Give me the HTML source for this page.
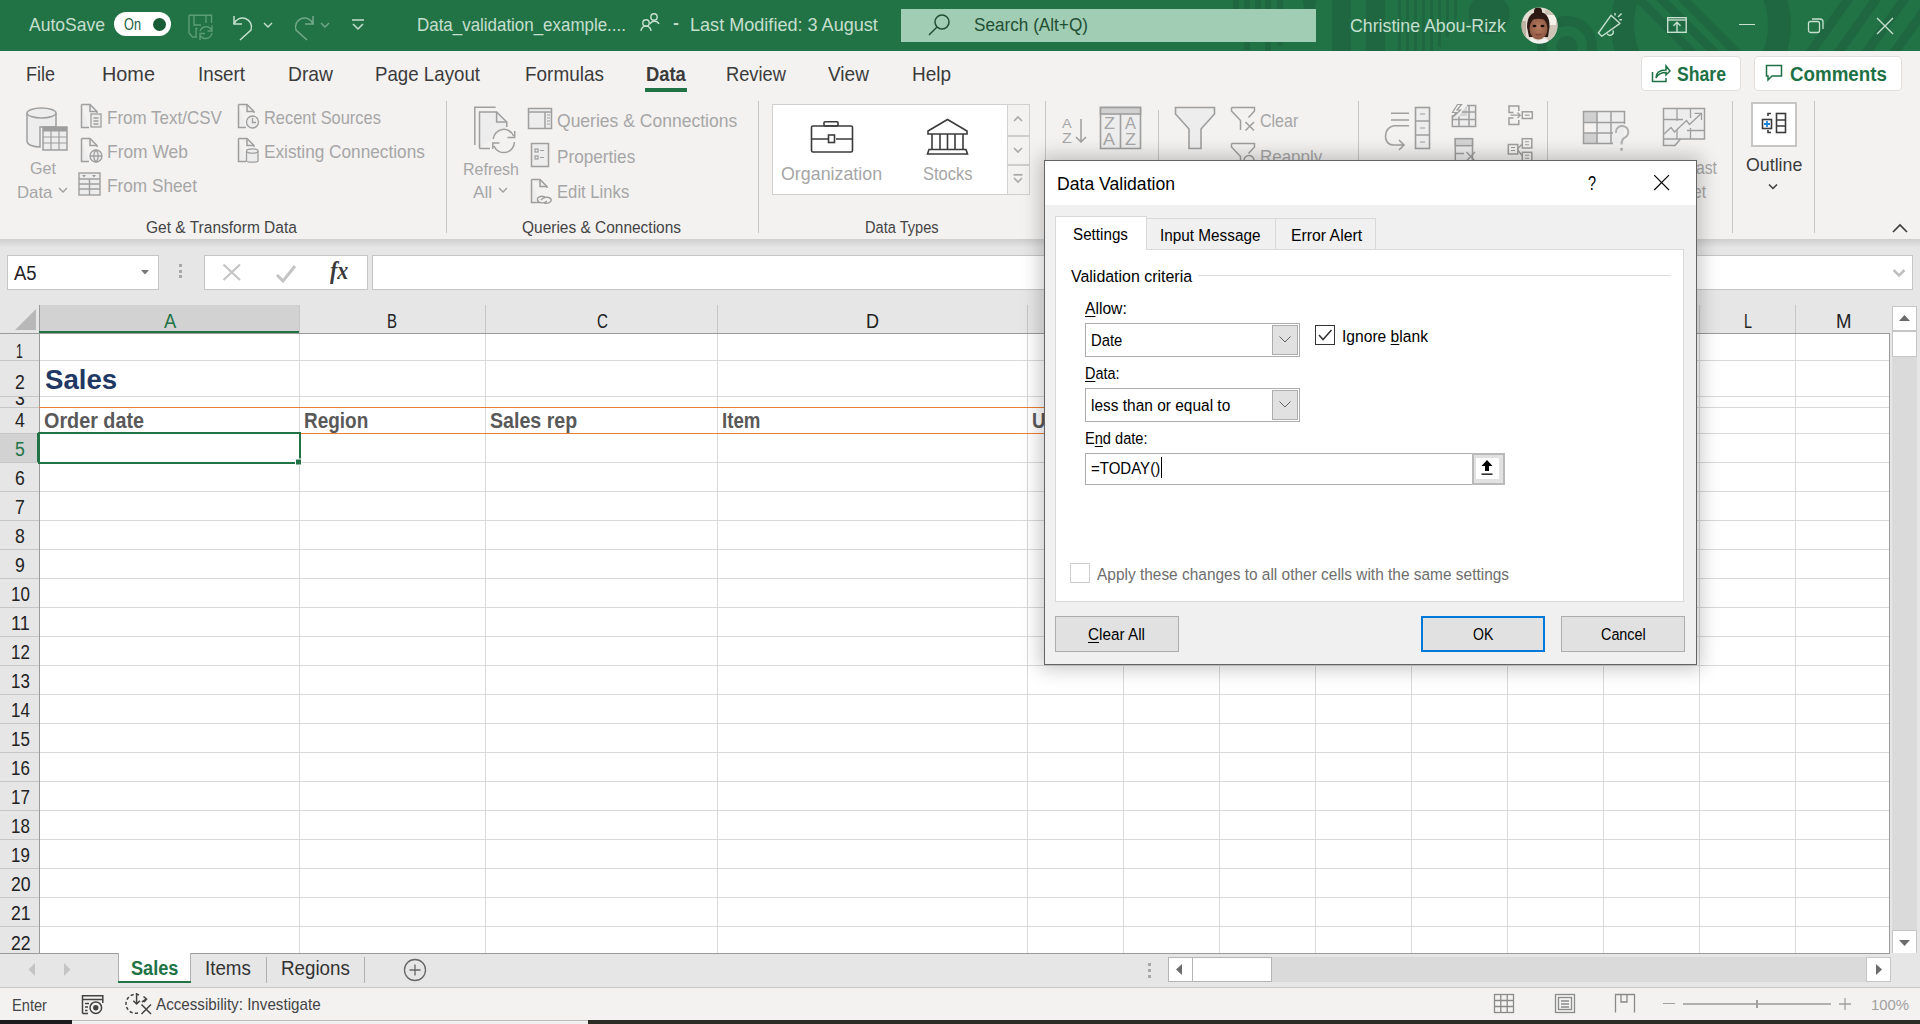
<!DOCTYPE html>
<html><head><meta charset="utf-8"><style>
html,body{margin:0;padding:0;width:1920px;height:1024px;overflow:hidden;background:#fff;position:relative;}
.t{position:absolute;white-space:nowrap;}
.r{position:absolute;}
svg.r{overflow:visible;}
u{text-decoration:underline;text-decoration-thickness:1px;text-underline-offset:2px;}
</style></head><body>
<div class="r" style="left:0px;top:0px;width:1920px;height:51px;background:#217346;"></div>
<svg class="r" style="left:1100px;top:0px;" width="820" height="51" viewBox="0 0 820 51"><rect x="133" y="0" width="6" height="9" fill="#1e6740"/><rect x="144" y="0" width="6" height="50" fill="#1e6740"/><rect x="155" y="0" width="6" height="9" fill="#1e6740"/><rect x="165" y="0" width="6" height="51" fill="#1e6740"/><rect x="177" y="0" width="6" height="46" fill="#1e6740"/><rect x="232" y="0" width="19" height="51" fill="#1e6740"/><rect x="266" y="0" width="19" height="51" fill="#1e6740"/><rect x="298" y="0" width="3" height="51" fill="#1e6740"/><rect x="306" y="0" width="3" height="51" fill="#1e6740"/><rect x="314" y="0" width="3" height="51" fill="#1e6740"/><rect x="322" y="0" width="3" height="51" fill="#1e6740"/><rect x="330" y="0" width="3" height="51" fill="#1e6740"/><rect x="338" y="0" width="3" height="47" fill="#1e6740"/><rect x="346" y="0" width="3" height="37" fill="#1e6740"/><rect x="354" y="0" width="3" height="20" fill="#1e6740"/><path d="M203 0 H216 L215 10 H204 Z" fill="#1e6740"/><circle cx="389" cy="14" r="20.6" fill="#1e6740"/><circle cx="467" cy="46" r="25" fill="none" stroke="#1e6740" stroke-width="10"/><circle cx="467" cy="46.5" r="10.6" fill="#1e6740"/><circle cx="601" cy="25" r="78.5" fill="none" stroke="#1e6740" stroke-width="23"/><defs><clipPath id="inr"><circle cx="601" cy="25" r="67"/></clipPath><clipPath id="outr"><rect x="691" y="0" width="200" height="51"/></clipPath></defs><g clip-path="url(#inr)"><path d="M534 0 H546 L597 51 H585 Z" fill="#1e6740"/><path d="M556 0 H568 L619 51 H607 Z" fill="#1e6740"/><path d="M578 0 H590 L641 51 H629 Z" fill="#1e6740"/></g><g clip-path="url(#outr)"><path d="M706 51 H717 L753 0 H742 Z" fill="#1e6740"/><path d="M734 51 H745 L781 0 H770 Z" fill="#1e6740"/><path d="M762 51 H773 L809 0 H798 Z" fill="#1e6740"/><path d="M790 51 H801 L837 0 H826 Z" fill="#1e6740"/></g></svg>
<div class="t" style="left:29.00px;top:14.00px;font-size:18.84px;line-height:normal;color:#c6dfcf;font-family:'Liberation Sans', sans-serif;transform:scaleX(0.9305);transform-origin:0 0;">AutoSave</div>
<div class="r" style="left:114px;top:12px;width:57px;height:24px;background:#ffffff;border-radius:12px;"></div>
<div class="t" style="left:124.00px;top:16.00px;font-size:15.94px;line-height:normal;color:#1b5e37;font-family:'Liberation Sans', sans-serif;transform:scaleX(0.7988);transform-origin:0 0;">On</div>
<div class="r" style="left:153px;top:18px;width:13px;height:13px;background:#185c37;border-radius:50%;"></div>
<svg class="r" style="left:184px;top:10px;" width="36" height="32" viewBox="0 0 36 32"><g fill="none" stroke="#5c9d74" stroke-width="1.4"><path d="M5 5.3 H27.5 V13 M5 5.3 V23 L8.5 27 H13"/><path d="M10 5.3 V15 H17"/><path d="M22 5.3 V13"/><path d="M12 27 V18.5 H13.5"/><path d="M16 21 A6.5 6.5 0 0 1 27.5 19.5 M28 15.5 V21 H23.5"/><path d="M28 23 A6.5 6.5 0 0 1 16.5 26 M16 30 V23.5 H21"/></g></svg>
<svg class="r" style="left:230px;top:12px;" width="30" height="30" viewBox="0 0 30 30"><g fill="none" stroke="#c6dfcf" stroke-width="1.5"><path d="M4 4 V12 H12"/><path d="M4 12 A9 9 0 1 1 21 18 L10 28"/></g></svg>
<svg class="r" style="left:262px;top:20px;" width="12" height="10" viewBox="0 0 12 10"><path d="M2 3 L6 7 L10 3" fill="none" stroke="#c6dfcf" stroke-width="1.4"/></svg>
<svg class="r" style="left:288px;top:12px;" width="30" height="30" viewBox="0 0 30 30"><g fill="none" stroke="#74a98a" stroke-width="1.5"><path d="M25 4 V12 H17"/><path d="M25 12 A9 9 0 1 0 8 18 L19 28"/></g></svg>
<svg class="r" style="left:319px;top:20px;" width="12" height="10" viewBox="0 0 12 10"><path d="M2 3 L6 7 L10 3" fill="none" stroke="#74a98a" stroke-width="1.4"/></svg>
<svg class="r" style="left:350px;top:17px;" width="16" height="14" viewBox="0 0 16 14"><g fill="none" stroke="#c6dfcf" stroke-width="1.5"><path d="M2 3 H14"/><path d="M3 7 L8 12 L13 7"/></g></svg>
<svg class="r" style="left:638px;top:11px;" width="24" height="22" viewBox="0 0 24 22"><g fill="none" stroke="#c6dfcf" stroke-width="1.4"><circle cx="8" cy="12" r="3.2"/><path d="M3 20 A5 5 0 0 1 13 20"/><circle cx="16" cy="6" r="3.2"/><path d="M12 13 A5 5 0 0 1 21 13"/></g></svg>
<div class="t" style="left:417.00px;top:14.00px;font-size:18.84px;line-height:normal;color:#c6dfcf;font-family:'Liberation Sans', sans-serif;transform:scaleX(0.8990);transform-origin:0 0;">Data_validation_example....</div>
<div class="t" style="left:673.00px;top:8.00px;font-size:24.53px;line-height:normal;color:#c6dfcf;font-family:'Liberation Sans', sans-serif;transform:scaleX(0.7302);transform-origin:0 0;">-</div>
<div class="t" style="left:690.00px;top:14.00px;font-size:18.84px;line-height:normal;color:#c6dfcf;font-family:'Liberation Sans', sans-serif;transform:scaleX(0.9599);transform-origin:0 0;">Last Modified: 3 August</div>
<div class="r" style="left:901px;top:9px;width:415px;height:33px;background:#a0cdb4;"></div>
<svg class="r" style="left:926px;top:12px;" width="28" height="28" viewBox="0 0 28 28"><g fill="none" stroke="#1f4f33" stroke-width="1.5"><circle cx="16" cy="10" r="7"/><path d="M11 15 L3 23"/></g></svg>
<div class="t" style="left:974.00px;top:14.00px;font-size:18.84px;line-height:normal;color:#1f4f33;font-family:'Liberation Sans', sans-serif;transform:scaleX(0.9113);transform-origin:0 0;">Search (Alt+Q)</div>
<div class="t" style="left:1350.00px;top:15.00px;font-size:18.84px;line-height:normal;color:#c6dfcf;font-family:'Liberation Sans', sans-serif;transform:scaleX(0.9425);transform-origin:0 0;">Christine Abou-Rizk</div>
<svg class="r" style="left:1521px;top:7px;" width="37" height="37" viewBox="0 0 37 37"><defs><clipPath id="av"><circle cx="18.5" cy="18.5" r="18"/></clipPath><radialGradient id="fc" cx="0.5" cy="0.45" r="0.6"><stop offset="0" stop-color="#b67b60"/><stop offset="1" stop-color="#8a5440"/></radialGradient></defs><g clip-path="url(#av)"><rect width="37" height="37" fill="#e2dcd2"/><rect x="24" y="3" width="13" height="30" fill="#cfc6b8"/><rect x="26" y="8" width="9" height="10" fill="#f4f1ea"/><rect x="0" y="14" width="5" height="20" fill="#bfb3a3"/><path d="M6 20 C6 9 11 5 17.5 5 C24 5 29 9 28.5 20 L27 30 H8 Z" fill="#2e1a14"/><ellipse cx="17.5" cy="21.5" rx="9" ry="11" fill="url(#fc)"/><circle cx="17" cy="4.5" r="4" fill="#2a1712"/><path d="M9 10 C12 7 23 7 26 11 L26 14 C22 11 13 11 9 14 Z" fill="#2e1a14"/><ellipse cx="13.5" cy="19" rx="2" ry="1.2" fill="#1a0e0a"/><ellipse cx="21.5" cy="19" rx="2" ry="1.2" fill="#1a0e0a"/><path d="M14.5 27 Q17.5 29 20.5 27" stroke="#7a3c35" stroke-width="1.2" fill="none"/><path d="M6 37 L10 31 L17 34 L25 31 L30 37 Z" fill="#f4f2f0"/></g></svg>
<svg class="r" style="left:1590px;top:8px;" width="40" height="34" viewBox="0 0 40 34"><g fill="none" stroke="#c6dfcf" stroke-width="1.4" stroke-linejoin="round"><path d="M8.4 25 L21 7.3 L30 15.4 L11.9 28.25 Z"/><path d="M17 25.5 A3.2 3.2 0 1 0 22.8 22.3"/><path d="M25 5 V7.6 M28 8.9 L31.6 5.4 M29.4 11.7 H31.9"/></g></svg>
<svg class="r" style="left:1665px;top:15px;" width="24" height="20" viewBox="0 0 24 20"><g fill="none" stroke="#c6dfcf" stroke-width="1.4"><rect x="2.7" y="2.7" width="18.5" height="14.6"/><path d="M2.7 5 H21.2"/><path d="M12 17.3 V7.3 M8.5 10.8 L12 7.3 L15.5 10.8"/></g></svg>
<div class="r" style="left:1739px;top:24px;width:16px;height:1.3px;background:#c6dfcf;"></div>
<svg class="r" style="left:1806px;top:16px;" width="22" height="20" viewBox="0 0 22 20"><g fill="none" stroke="#c6dfcf" stroke-width="1.3"><rect x="2.5" y="5.5" width="11" height="11" rx="2"/><path d="M6 3 H14 A3 3 0 0 1 17 6 V13"/></g></svg>
<svg class="r" style="left:1875px;top:16px;" width="20" height="20" viewBox="0 0 20 20"><g fill="none" stroke="#c6dfcf" stroke-width="1.4"><path d="M2 2 L18 18 M18 2 L2 18"/></g></svg>
<div class="r" style="left:0px;top:51px;width:1920px;height:189px;background:#f3f2f1;"></div>
<div class="t" style="left:26.00px;top:63.00px;font-size:20.29px;line-height:normal;color:#3b3b3b;font-family:'Liberation Sans', sans-serif;transform:scaleX(0.8878);transform-origin:0 0;">File</div>
<div class="t" style="left:102.00px;top:63.00px;font-size:20.29px;line-height:normal;color:#3b3b3b;font-family:'Liberation Sans', sans-serif;transform:scaleX(0.9783);transform-origin:0 0;">Home</div>
<div class="t" style="left:198.00px;top:63.00px;font-size:20.29px;line-height:normal;color:#3b3b3b;font-family:'Liberation Sans', sans-serif;transform:scaleX(0.9266);transform-origin:0 0;">Insert</div>
<div class="t" style="left:288.00px;top:63.00px;font-size:20.29px;line-height:normal;color:#3b3b3b;font-family:'Liberation Sans', sans-serif;transform:scaleX(0.9498);transform-origin:0 0;">Draw</div>
<div class="t" style="left:375.00px;top:63.00px;font-size:20.29px;line-height:normal;color:#3b3b3b;font-family:'Liberation Sans', sans-serif;transform:scaleX(0.9216);transform-origin:0 0;">Page Layout</div>
<div class="t" style="left:525.00px;top:63.00px;font-size:20.29px;line-height:normal;color:#3b3b3b;font-family:'Liberation Sans', sans-serif;transform:scaleX(0.9337);transform-origin:0 0;">Formulas</div>
<div class="t" style="left:646.00px;top:63.00px;font-size:20.29px;line-height:normal;color:#3b3b3b;font-family:'Liberation Sans', sans-serif;font-weight:bold;transform:scaleX(0.9064);transform-origin:0 0;">Data</div>
<div class="t" style="left:726.00px;top:63.00px;font-size:20.29px;line-height:normal;color:#3b3b3b;font-family:'Liberation Sans', sans-serif;transform:scaleX(0.9016);transform-origin:0 0;">Review</div>
<div class="t" style="left:828.00px;top:63.00px;font-size:20.29px;line-height:normal;color:#3b3b3b;font-family:'Liberation Sans', sans-serif;transform:scaleX(0.9399);transform-origin:0 0;">View</div>
<div class="t" style="left:912.00px;top:63.00px;font-size:20.29px;line-height:normal;color:#3b3b3b;font-family:'Liberation Sans', sans-serif;transform:scaleX(0.9353);transform-origin:0 0;">Help</div>
<div class="r" style="left:645px;top:88px;width:42px;height:4px;background:#217346;"></div>
<div class="r" style="left:1641px;top:56px;width:100px;height:35px;background:#ffffff;border:1px solid #e1dfdd;box-sizing:border-box;border-radius:4px;"></div>
<svg class="r" style="left:1650px;top:63px;" width="22" height="20" viewBox="0 0 22 20"><g fill="none" stroke="#1e7145" stroke-width="1.5"><path d="M2.5 9 V18.5 H16 V15"/><path d="M6 15 C6 9 10 7 16 7 V3 L20 8 L16 12 V9.5 C11 9.5 8 11 6 15Z"/></g></svg>
<div class="t" style="left:1677.00px;top:63.00px;font-size:20.29px;line-height:normal;color:#1e7145;font-family:'Liberation Sans', sans-serif;font-weight:bold;transform:scaleX(0.8687);transform-origin:0 0;">Share</div>
<div class="r" style="left:1754px;top:56px;width:148px;height:35px;background:#ffffff;border:1px solid #e1dfdd;box-sizing:border-box;border-radius:4px;"></div>
<svg class="r" style="left:1764px;top:63px;" width="20" height="20" viewBox="0 0 20 20"><g fill="none" stroke="#1e7145" stroke-width="1.5"><path d="M2.5 2.5 H17.5 V13 H8 L4 17 V13 H2.5 Z"/></g></svg>
<div class="t" style="left:1790.00px;top:63.00px;font-size:20.29px;line-height:normal;color:#1e7145;font-family:'Liberation Sans', sans-serif;font-weight:bold;transform:scaleX(0.9247);transform-origin:0 0;">Comments</div>
<div class="r" style="left:446px;top:101px;width:1px;height:132px;background:#c8c6c4;"></div>
<div class="r" style="left:758px;top:101px;width:1px;height:132px;background:#c8c6c4;"></div>
<div class="r" style="left:1045px;top:101px;width:1px;height:132px;background:#c8c6c4;"></div>
<div class="r" style="left:1358px;top:101px;width:1px;height:132px;background:#c8c6c4;"></div>
<div class="r" style="left:1547px;top:101px;width:1px;height:132px;background:#c8c6c4;"></div>
<div class="r" style="left:1732px;top:101px;width:1px;height:132px;background:#c8c6c4;"></div>
<div class="r" style="left:1814px;top:101px;width:1px;height:132px;background:#c8c6c4;"></div>
<div class="r" style="left:1158px;top:110px;width:1px;height:123px;background:#c8c6c4;"></div>
<svg class="r" style="left:24px;top:105px;" width="46" height="50" viewBox="0 0 46 50"><g fill="#ededed" stroke="#9e9e9e" stroke-width="1.5"><path d="M3 8 V36 C3 40 10 42 16 42 V22 H32 V8"/><ellipse cx="17.5" cy="8" rx="14.5" ry="5"/><rect x="19" y="22" width="24" height="23"/></g><g stroke="#9e9e9e" stroke-width="1.2"><path d="M19 26 H43 M19 32 H43 M19 38 H43 M27 22 V45 M35 22 V45"/></g><rect x="19" y="22" width="24" height="4" fill="#9e9e9e"/></svg>
<div class="t" style="left:30.00px;top:158.00px;font-size:17.39px;line-height:normal;color:#a6a6a6;font-family:'Liberation Sans', sans-serif;transform:scaleX(0.9286);transform-origin:0 0;">Get</div>
<div class="t" style="left:17.00px;top:182.00px;font-size:17.39px;line-height:normal;color:#a6a6a6;font-family:'Liberation Sans', sans-serif;transform:scaleX(0.9651);transform-origin:0 0;">Data</div>
<svg class="r" style="left:57px;top:186px;" width="12" height="9" viewBox="0 0 12 9"><path d="M2 2 L6 6 L10 2" fill="none" stroke="#9e9e9e" stroke-width="1.3"/></svg>
<svg class="r" style="left:80px;top:103px;" width="24" height="26" viewBox="0 0 24 26"><g fill="#ededed" stroke="#9e9e9e" stroke-width="1.5"><path d="M1.5 1.5 H10 L17 8.5 V10 M1.5 1.5 V24.5 H9"/><path d="M10 1.5 V8.5 H17" fill="none"/></g><g fill="#ededed" stroke="#9e9e9e" stroke-width="1.3"><rect x="11" y="11" width="10" height="13"/><path d="M13.5 15 H18.5 M13.5 18 H18.5 M13.5 21 H18.5"/></g></svg>
<div class="t" style="left:107.00px;top:107.00px;font-size:18.84px;line-height:normal;color:#a6a6a6;font-family:'Liberation Sans', sans-serif;transform:scaleX(0.9029);transform-origin:0 0;">From Text/CSV</div>
<svg class="r" style="left:80px;top:137px;" width="24" height="26" viewBox="0 0 24 26"><g fill="#ededed" stroke="#9e9e9e" stroke-width="1.5"><path d="M1.5 1.5 H10 L17 8.5 V10 M1.5 1.5 V24.5 H9"/><path d="M10 1.5 V8.5 H17" fill="none"/></g><g fill="#ededed" stroke="#9e9e9e" stroke-width="1.3"><circle cx="16" cy="19" r="6"/><path d="M10 19 H22 M16 13 C13 16 13 22 16 25 C19 22 19 16 16 13"/></g></svg>
<div class="t" style="left:107.00px;top:141.00px;font-size:18.84px;line-height:normal;color:#a6a6a6;font-family:'Liberation Sans', sans-serif;transform:scaleX(0.9246);transform-origin:0 0;">From Web</div>
<svg class="r" style="left:77px;top:171px;" width="26" height="26" viewBox="0 0 26 26"><g fill="#ededed" stroke="#9e9e9e" stroke-width="1.4"><rect x="2" y="2" width="21" height="22"/><path d="M2 8 H23 M2 13 H23 M2 18 H23 M12.5 8 V24"/></g><path d="M5 4 L7 6.5 L9 4Z M15 4 L17 6.5 L19 4Z" fill="#9e9e9e"/></svg>
<div class="t" style="left:107.00px;top:175.00px;font-size:18.84px;line-height:normal;color:#a6a6a6;font-family:'Liberation Sans', sans-serif;transform:scaleX(0.9142);transform-origin:0 0;">From Sheet</div>
<svg class="r" style="left:237px;top:103px;" width="24" height="26" viewBox="0 0 24 26"><g fill="#ededed" stroke="#9e9e9e" stroke-width="1.5"><path d="M1.5 1.5 H10 L17 8.5 V10 M1.5 1.5 V24.5 H9"/><path d="M10 1.5 V8.5 H17" fill="none"/></g><g fill="#ededed" stroke="#9e9e9e" stroke-width="1.3"><circle cx="15.5" cy="19" r="6"/><path d="M15.5 15 V19.5 H19"/></g></svg>
<div class="t" style="left:264.00px;top:107.00px;font-size:18.84px;line-height:normal;color:#a6a6a6;font-family:'Liberation Sans', sans-serif;transform:scaleX(0.8728);transform-origin:0 0;">Recent Sources</div>
<svg class="r" style="left:237px;top:137px;" width="24" height="26" viewBox="0 0 24 26"><g fill="#ededed" stroke="#9e9e9e" stroke-width="1.5"><path d="M1.5 1.5 H10 L17 8.5 V10 M1.5 1.5 V24.5 H9"/><path d="M10 1.5 V8.5 H17" fill="none"/></g><g fill="#ededed" stroke="#9e9e9e" stroke-width="1.3"><path d="M9.5 14 V24 C9.5 25.5 21 25.5 21 24 V14"/><ellipse cx="15.25" cy="14" rx="5.75" ry="2.2"/></g></svg>
<div class="t" style="left:264.00px;top:141.00px;font-size:18.84px;line-height:normal;color:#a6a6a6;font-family:'Liberation Sans', sans-serif;transform:scaleX(0.9149);transform-origin:0 0;">Existing Connections</div>
<div class="t" style="left:146.00px;top:219.00px;font-size:15.94px;line-height:normal;color:#444444;font-family:'Liberation Sans', sans-serif;transform:scaleX(0.9735);transform-origin:0 0;">Get &amp; Transform Data</div>
<svg class="r" style="left:470px;top:102px;" width="50" height="52" viewBox="0 0 50 52"><g fill="none" stroke="#9e9e9e" stroke-width="1.5"><path d="M4.8 43 V5.2 H25.6"/></g><g fill="#ededed" stroke="#9e9e9e" stroke-width="1.5"><path d="M9.5 46.6 V10 H26.6 L36.8 20 V25 M9.5 46.6 H20"/></g><path d="M26.6 10 V20 H36.8" fill="none" stroke="#9e9e9e" stroke-width="1.5"/><g fill="none" stroke="#9e9e9e" stroke-width="1.5"><path d="M23.2 37 A10.6 10.6 0 0 1 43.6 34 M44.7 29 V35.5 H37.5"/><path d="M44.4 40 A10.6 10.6 0 0 1 24 44 M22.8 47 V41 H29.4"/></g></svg>
<div class="t" style="left:463.00px;top:159.00px;font-size:17.39px;line-height:normal;color:#a6a6a6;font-family:'Liberation Sans', sans-serif;transform:scaleX(0.9200);transform-origin:0 0;">Refresh</div>
<div class="t" style="left:473.30px;top:182.00px;font-size:17.39px;line-height:normal;color:#a6a6a6;font-family:'Liberation Sans', sans-serif;transform:scaleX(0.9946);transform-origin:0 0;">All</div>
<svg class="r" style="left:497px;top:186px;" width="12" height="9" viewBox="0 0 12 9"><path d="M2 2 L6 6 L10 2" fill="none" stroke="#9e9e9e" stroke-width="1.3"/></svg>
<svg class="r" style="left:527px;top:107px;" width="27" height="24" viewBox="0 0 27 24"><g fill="#ededed" stroke="#9e9e9e" stroke-width="1.5"><rect x="1.5" y="1.5" width="23" height="20"/><path d="M1.5 5 H24.5 M18 5 V21.5"/></g><path d="M20 8 H23 M20 11 H23 M20 14 H23 M20 17 H23" stroke="#9e9e9e" stroke-width="1.2"/></svg>
<div class="t" style="left:556.70px;top:110.00px;font-size:18.84px;line-height:normal;color:#a6a6a6;font-family:'Liberation Sans', sans-serif;transform:scaleX(0.9305);transform-origin:0 0;">Queries &amp; Connections</div>
<svg class="r" style="left:530px;top:142px;" width="21" height="26" viewBox="0 0 21 26"><g fill="#ededed" stroke="#9e9e9e" stroke-width="1.5"><rect x="1.5" y="1.5" width="17" height="23"/></g><g fill="none" stroke="#9e9e9e" stroke-width="1.2"><rect x="5" y="7" width="3" height="3"/><rect x="5" y="14" width="3" height="3"/><path d="M10 8.5 H14 M10 15.5 H14"/></g></svg>
<div class="t" style="left:556.70px;top:146.00px;font-size:18.84px;line-height:normal;color:#a6a6a6;font-family:'Liberation Sans', sans-serif;transform:scaleX(0.9114);transform-origin:0 0;">Properties</div>
<svg class="r" style="left:530px;top:178px;" width="24" height="26" viewBox="0 0 24 26"><g fill="#ededed" stroke="#9e9e9e" stroke-width="1.5"><path d="M1.5 1.5 H10 L17 8.5 V10 M1.5 1.5 V24.5 H9"/><path d="M10 1.5 V8.5 H17" fill="none"/></g><g fill="none" stroke="#9e9e9e" stroke-width="1.4"><path d="M15 19 C10 17 6 20 8 23 C10 26 15 25 17 23"/><path d="M11 22 C13 19 19 18 21 21 C22 24 18 26 14 25"/></g></svg>
<div class="t" style="left:556.70px;top:181.00px;font-size:18.84px;line-height:normal;color:#a6a6a6;font-family:'Liberation Sans', sans-serif;transform:scaleX(0.8852);transform-origin:0 0;">Edit Links</div>
<div class="t" style="left:521.70px;top:219.00px;font-size:15.94px;line-height:normal;color:#444444;font-family:'Liberation Sans', sans-serif;transform:scaleX(0.9703);transform-origin:0 0;">Queries &amp; Connections</div>
<div class="r" style="left:772px;top:104px;width:258px;height:91px;background:#ffffff;border:1px solid #d2d0ce;box-sizing:border-box;"></div>
<div class="r" style="left:1008px;top:105px;width:21px;height:89px;background:#f3f2f1;"></div>
<div class="r" style="left:1007px;top:104px;width:1px;height:91px;background:#d2d0ce;"></div>
<div class="r" style="left:1007px;top:135px;width:23px;height:2px;background:#cfcdcb;"></div>
<div class="r" style="left:1007px;top:164px;width:23px;height:2px;background:#cfcdcb;"></div>
<svg class="r" style="left:1012px;top:114px;" width="12" height="10" viewBox="0 0 12 10"><path d="M2 7 L6 3 L10 7" fill="none" stroke="#aaaaaa" stroke-width="1.6"/></svg>
<svg class="r" style="left:1012px;top:145px;" width="12" height="10" viewBox="0 0 12 10"><path d="M2 3 L6 7 L10 3" fill="none" stroke="#aaaaaa" stroke-width="1.6"/></svg>
<svg class="r" style="left:1012px;top:172px;" width="12" height="12" viewBox="0 0 12 12"><path d="M1.5 2.8 H10.5" stroke="#aaaaaa" stroke-width="1.8"/><path d="M2 6 L6 10 L10 6" fill="none" stroke="#aaaaaa" stroke-width="1.6"/></svg>
<svg class="r" style="left:809px;top:120px;" width="46" height="34" viewBox="0 0 46 34"><g fill="none" stroke="#3b3b3b" stroke-width="1.6"><rect x="2.5" y="6" width="41" height="26" rx="1.5"/><rect x="15" y="1.8" width="14" height="4.2" rx="1"/><path d="M2.5 19 H19 M27 19 H43.5"/><rect x="19.5" y="15" width="6" height="7.5"/></g></svg>
<svg class="r" style="left:925px;top:117px;" width="46" height="40" viewBox="0 0 46 40"><g fill="none" stroke="#3b3b3b" stroke-width="1.6"><path d="M3 14 L22.5 2.5 L42 14 V17 H3 Z"/><path d="M7 17 V32 M15 17 V32 M22.5 17 V32 M30 17 V32 M38 17 V32"/><path d="M4 32.5 H41 L42.5 37 H2.5 Z"/></g></svg>
<div class="t" style="left:781.30px;top:163.00px;font-size:18.84px;line-height:normal;color:#a6a6a6;font-family:'Liberation Sans', sans-serif;transform:scaleX(0.9473);transform-origin:0 0;">Organization</div>
<div class="t" style="left:922.50px;top:163.00px;font-size:18.84px;line-height:normal;color:#a6a6a6;font-family:'Liberation Sans', sans-serif;transform:scaleX(0.8758);transform-origin:0 0;">Stocks</div>
<div class="t" style="left:864.70px;top:219.00px;font-size:15.94px;line-height:normal;color:#444444;font-family:'Liberation Sans', sans-serif;transform:scaleX(0.9160);transform-origin:0 0;">Data Types</div>
<div class="t" style="left:1062.00px;top:116.00px;font-size:13.04px;line-height:normal;color:#a6a6a6;font-family:'Liberation Sans', sans-serif;transform:scaleX(1.1214);transform-origin:0 0;">A</div>
<div class="t" style="left:1062.00px;top:130.00px;font-size:14.49px;line-height:normal;color:#a6a6a6;font-family:'Liberation Sans', sans-serif;transform:scaleX(1.1085);transform-origin:0 0;">Z</div>
<svg class="r" style="left:1074px;top:117px;" width="14" height="28" viewBox="0 0 14 28"><g fill="none" stroke="#9e9e9e" stroke-width="1.5"><path d="M7 2 V25 M2 20 L7 25 L12 20"/></g></svg>
<svg class="r" style="left:1098px;top:105px;" width="46" height="46" viewBox="0 0 46 46"><g fill="#ededed" stroke="#9e9e9e" stroke-width="1.6"><rect x="2.5" y="2.5" width="40" height="41"/><path d="M22.5 9 V43.5"/></g><rect x="2.5" y="2.5" width="40" height="6.5" fill="#d0d0d0" stroke="#9e9e9e" stroke-width="1.6"/></svg>
<div class="t" style="left:1104.00px;top:114.00px;font-size:16.67px;line-height:normal;color:#a6a6a6;font-family:'Liberation Sans', sans-serif;transform:scaleX(1.0820);transform-origin:0 0;">Z</div>
<div class="t" style="left:1103.00px;top:129.00px;font-size:17.39px;line-height:normal;color:#a6a6a6;font-family:'Liberation Sans', sans-serif;transform:scaleX(1.0299);transform-origin:0 0;">A</div>
<div class="t" style="left:1125.00px;top:114.00px;font-size:16.67px;line-height:normal;color:#a6a6a6;font-family:'Liberation Sans', sans-serif;transform:scaleX(0.9851);transform-origin:0 0;">A</div>
<div class="t" style="left:1125.00px;top:129.00px;font-size:17.39px;line-height:normal;color:#a6a6a6;font-family:'Liberation Sans', sans-serif;transform:scaleX(1.0369);transform-origin:0 0;">Z</div>
<svg class="r" style="left:1173px;top:105px;" width="45" height="46" viewBox="0 0 45 46"><path d="M2.5 2.5 H41.5 V9 L28 24 V43.5 H16 V24 L2.5 9 Z" fill="#ededed" stroke="#9e9e9e" stroke-width="1.6"/></svg>
<svg class="r" style="left:1229px;top:105px;" width="30" height="30" viewBox="0 0 30 30"><g fill="none" stroke="#9e9e9e" stroke-width="1.5"><path d="M2.5 2.5 H25.5 V6 L19.5 12.5 M2.5 2.5 V6 L11.5 15.5 V25"/><path d="M16.5 17 L25 25.5 M25 17 L16.5 25.5"/></g></svg>
<div class="t" style="left:1259.70px;top:110.00px;font-size:18.84px;line-height:normal;color:#a6a6a6;font-family:'Liberation Sans', sans-serif;transform:scaleX(0.8506);transform-origin:0 0;">Clear</div>
<svg class="r" style="left:1229px;top:141px;" width="30" height="22" viewBox="0 0 30 22"><g fill="none" stroke="#9e9e9e" stroke-width="1.5"><path d="M2.5 2.5 H25.5 V6 L19.5 12.5 M2.5 2.5 V6 L11.5 15.5 V25"/><path d="M15 20 A5 5 0 0 1 25 19"/></g></svg>
<div class="t" style="left:1259.70px;top:146.00px;font-size:18.84px;line-height:normal;color:#a6a6a6;font-family:'Liberation Sans', sans-serif;transform:scaleX(0.9010);transform-origin:0 0;">Reapply</div>
<svg class="r" style="left:1383px;top:105px;" width="50" height="50" viewBox="0 0 50 50"><g fill="none" stroke="#9e9e9e" stroke-width="1.6"><path d="M8 8.3 H26 M8 15 H26 M10 20.8 H26"/><path d="M10 21 C0 23 0 40 10 40 H20 M16 35 L21 40 L16 45"/></g><g fill="#ededed" stroke="#9e9e9e" stroke-width="1.6"><rect x="32.5" y="2.5" width="14" height="41"/><path d="M32.5 16 H46.5 M32.5 30 H46.5"/></g><path d="M37 9 H42 M37 23 H42 M37 37 H42" stroke="#9e9e9e" stroke-width="1.2"/></svg>
<svg class="r" style="left:1445px;top:100px;" width="40" height="64" viewBox="0 0 40 64"><path d="M9 16 H7.3 V26.4 H30.6 V5.5 H22" fill="#ededed" stroke="#9e9e9e" stroke-width="1.5"/><path d="M22 5.5 L14 16 H22 Z" fill="#d4d4d4"/><g fill="none" stroke="#9e9e9e" stroke-width="1.5"><path d="M7.3 19.5 H30.6 M17 12 H30.6 M14 16.5 V26.4 M24 5.5 V26.4"/><path d="M16.5 4.5 H12.5 L7.5 12.5 H11 L7.5 17.5 L15.5 10 H12 Z" stroke-width="1.2"/></g></svg>
<svg class="r" style="left:1445px;top:100px;" width="40" height="64" viewBox="0 0 40 64"><rect x="10.3" y="38.7" width="17.2" height="30" fill="#ededed" stroke="#9e9e9e" stroke-width="1.5"/><rect x="10.3" y="38.7" width="17.2" height="7" fill="#d4d4d4" stroke="#9e9e9e" stroke-width="1.5"/><path d="M10.3 53.5 H19" stroke="#9e9e9e" stroke-width="1.5"/><path d="M21.5 52 L30 61 M30 52 L21.5 61" stroke="#9e9e9e" stroke-width="1.3"/></svg>
<svg class="r" style="left:1500px;top:100px;" width="40" height="64" viewBox="0 0 40 64"><g fill="none" stroke="#9e9e9e" stroke-width="1.5"><path d="M13.5 12.5 H9 V6 H18.8 V11"/><path d="M13.5 18 H9 V24.4 H18.8 V20"/><path d="M10.5 15.2 H20 M17.5 12.5 L20.3 15.2 L17.5 18" stroke-width="1.2"/><rect x="22.3" y="11.8" width="10" height="6.7"/></g><path d="M25 15.2 H29.5" stroke="#9e9e9e" stroke-width="1.2"/></svg>
<svg class="r" style="left:1500px;top:100px;" width="40" height="64" viewBox="0 0 40 64"><g fill="none" stroke="#9e9e9e" stroke-width="1.5"><rect x="8.3" y="44.5" width="9.5" height="9.5"/><rect x="22.3" y="38.7" width="9.5" height="9.3"/><rect x="22.3" y="52.3" width="9.5" height="9.5"/><path d="M17.8 48.5 L22.3 44 M17.8 50 L22.3 56"/></g><path d="M11 47.5 H15 M11 50.5 H15 M25 41.8 H29 M25 44.8 H29 M25 55.3 H29 M25 58.3 H29" stroke="#9e9e9e" stroke-width="1.1"/></svg>
<svg class="r" style="left:1581px;top:109px;" width="50" height="46" viewBox="0 0 50 46"><rect x="3" y="3" width="13" height="10" fill="#d0d0d0"/><rect x="3" y="24" width="13" height="10" fill="#d0d0d0"/><rect x="16" y="3" width="27" height="31" fill="#ededed"/><g fill="none" stroke="#9e9e9e" stroke-width="1.5"><path d="M32 34.5 H2.5 V2.5 H43.5 V15"/><path d="M2.5 13.5 H43.5 M2.5 24 H32 M16 2.5 V34.5 M30 2.5 V34.5"/></g><path d="M35 24 A6.2 6.2 0 1 1 43 29 C40.5 31 40.5 33 40.5 35.5" fill="none" stroke="#b0b0b0" stroke-width="2"/><rect x="39.3" y="39" width="2.6" height="2.6" fill="#b0b0b0"/></svg>
<svg class="r" style="left:1661px;top:106px;" width="48" height="42" viewBox="0 0 48 42"><g fill="#ededed" stroke="#9e9e9e" stroke-width="1.5"><path d="M2.5 2.5 H43.5 V33 H19.5 L14 39.5 H2.5 Z"/></g><g fill="none" stroke="#9e9e9e" stroke-width="1.3"><path d="M2.5 13.5 H22 M26 24.5 H43.5 M2.5 33 H19.5 M16 2.5 V15 M16 24 V33 M29.5 2.5 V12 M29.5 22 V33"/><path d="M2.5 28.5 L10 21.5 L13.5 26 L25.5 14.5 L28.5 18.5 L40.5 7.3 M33.5 7.3 H40.5 V14"/></g></svg>
<div class="t" style="left:1696.00px;top:157.00px;font-size:18.46px;line-height:normal;color:#a6a6a6;font-family:'Liberation Sans', sans-serif;transform:scaleX(0.8521);transform-origin:0 0;">ast</div>
<div class="t" style="left:1693.00px;top:181.00px;font-size:18.46px;line-height:normal;color:#a6a6a6;font-family:'Liberation Sans', sans-serif;transform:scaleX(0.8433);transform-origin:0 0;">et</div>
<div class="r" style="left:1751px;top:102px;width:46px;height:45px;background:#ffffff;border:2px solid #c8c6c4;box-sizing:border-box;"></div>
<svg class="r" style="left:1760px;top:111px;" width="28" height="24" viewBox="0 0 28 24"><g fill="none" stroke="#3b3b3b" stroke-width="1.6"><rect x="2.5" y="8.5" width="9" height="9"/><rect x="16.5" y="2.5" width="9" height="19"/><path d="M16.5 9 H25.5 M16.5 15 H25.5"/><path d="M11 2.5 H8 V5 M11 21.5 H8 V19"/></g><path d="M7 10 V16 M4 13 H10" stroke="#1a86d9" stroke-width="1.8"/></svg>
<div class="t" style="left:1745.60px;top:154.00px;font-size:18.84px;line-height:normal;color:#3b3b3b;font-family:'Liberation Sans', sans-serif;transform:scaleX(0.9443);transform-origin:0 0;">Outline</div>
<svg class="r" style="left:1767px;top:182px;" width="12" height="10" viewBox="0 0 12 10"><path d="M2 2.5 L6 6.5 L10 2.5" fill="none" stroke="#3b3b3b" stroke-width="1.5"/></svg>
<svg class="r" style="left:1891px;top:222px;" width="18" height="13" viewBox="0 0 18 13"><path d="M2 10 L9 3 L16 10" fill="none" stroke="#3b3b3b" stroke-width="1.6"/></svg>
<div class="r" style="left:0px;top:239px;width:1920px;height:9px;background:linear-gradient(#cfcfcf,#e6e6e6);"></div>
<div class="r" style="left:0px;top:248px;width:1920px;height:57px;background:#e6e6e6;"></div>
<div class="r" style="left:7px;top:255px;width:152px;height:35px;background:#ffffff;border:1px solid #c6c6c6;box-sizing:border-box;"></div>
<div class="t" style="left:14.40px;top:262.00px;font-size:19.42px;line-height:normal;color:#222222;font-family:'Liberation Sans', sans-serif;transform:scaleX(0.9500);transform-origin:0 0;">A5</div>
<svg class="r" style="left:140px;top:269px;" width="10" height="7" viewBox="0 0 10 7"><path d="M1 1 H9 L5 5.5Z" fill="#777"/></svg>
<div class="r" style="left:179px;top:264px;width:3px;height:3px;background:#a8a8a8;"></div>
<div class="r" style="left:179px;top:269.5px;width:3px;height:3px;background:#a8a8a8;"></div>
<div class="r" style="left:179px;top:275px;width:3px;height:3px;background:#a8a8a8;"></div>
<div class="r" style="left:204px;top:255px;width:164px;height:35px;background:#ffffff;border:1px solid #c6c6c6;box-sizing:border-box;"></div>
<svg class="r" style="left:220px;top:262px;" width="24" height="20" viewBox="0 0 24 20"><path d="M3.5 2.5 L20 18 M20 2.5 L3.5 18" stroke="#c4c4c4" stroke-width="2.2"/></svg>
<svg class="r" style="left:274px;top:262px;" width="24" height="22" viewBox="0 0 24 22"><path d="M3 13 L9 19 L21 4" fill="none" stroke="#c4c4c4" stroke-width="3"/></svg>
<div class="t" style="left:330.00px;top:257.00px;font-size:24.82px;line-height:normal;color:#3a3a3a;font-family:'Liberation Serif', serif;font-weight:bold;font-style:italic;transform:scaleX(0.8877);transform-origin:0 0;">fx</div>
<div class="r" style="left:372px;top:255px;width:1541px;height:35px;background:#ffffff;border:1px solid #c6c6c6;box-sizing:border-box;"></div>
<svg class="r" style="left:1892px;top:268px;" width="14" height="11" viewBox="0 0 14 11"><path d="M1.5 2 L7 7.5 L12.5 2" fill="none" stroke="#c0c0c0" stroke-width="2.5"/></svg>
<div class="r" style="left:0px;top:305px;width:1890px;height:28px;background:#e6e6e6;"></div>
<div class="r" style="left:39px;top:305px;width:260px;height:28px;background:#d2d2d2;"></div>
<div class="r" style="left:0px;top:333px;width:39px;height:620px;background:#e6e6e6;"></div>
<div class="r" style="left:39px;top:333px;width:1851px;height:620px;background:#ffffff;"></div>
<div class="r" style="left:0px;top:433px;width:39px;height:29px;background:#d2d2d2;"></div>
<svg class="r" style="left:0px;top:0px;pointer-events:none;" width="1920" height="1024" viewBox="0 0 1920 1024"><rect x="299" y="333" width="1" height="620" fill="#d9d9d9"/><rect x="485" y="333" width="1" height="620" fill="#d9d9d9"/><rect x="717" y="333" width="1" height="620" fill="#d9d9d9"/><rect x="1027" y="333" width="1" height="620" fill="#d9d9d9"/><rect x="1123" y="333" width="1" height="620" fill="#d9d9d9"/><rect x="1219" y="333" width="1" height="620" fill="#d9d9d9"/><rect x="1315" y="333" width="1" height="620" fill="#d9d9d9"/><rect x="1411" y="333" width="1" height="620" fill="#d9d9d9"/><rect x="1507" y="333" width="1" height="620" fill="#d9d9d9"/><rect x="1603" y="333" width="1" height="620" fill="#d9d9d9"/><rect x="1699" y="333" width="1" height="620" fill="#d9d9d9"/><rect x="1795" y="333" width="1" height="620" fill="#d9d9d9"/><rect x="39" y="360" width="1850" height="1" fill="#d9d9d9"/><rect x="39" y="396" width="1850" height="1" fill="#d9d9d9"/><rect x="39" y="407" width="1850" height="1" fill="#d9d9d9"/><rect x="39" y="433" width="1850" height="1" fill="#d9d9d9"/><rect x="39" y="462" width="1850" height="1" fill="#d9d9d9"/><rect x="39" y="491" width="1850" height="1" fill="#d9d9d9"/><rect x="39" y="520" width="1850" height="1" fill="#d9d9d9"/><rect x="39" y="549" width="1850" height="1" fill="#d9d9d9"/><rect x="39" y="578" width="1850" height="1" fill="#d9d9d9"/><rect x="39" y="607" width="1850" height="1" fill="#d9d9d9"/><rect x="39" y="636" width="1850" height="1" fill="#d9d9d9"/><rect x="39" y="665" width="1850" height="1" fill="#d9d9d9"/><rect x="39" y="694" width="1850" height="1" fill="#d9d9d9"/><rect x="39" y="723" width="1850" height="1" fill="#d9d9d9"/><rect x="39" y="752" width="1850" height="1" fill="#d9d9d9"/><rect x="39" y="781" width="1850" height="1" fill="#d9d9d9"/><rect x="39" y="810" width="1850" height="1" fill="#d9d9d9"/><rect x="39" y="839" width="1850" height="1" fill="#d9d9d9"/><rect x="39" y="868" width="1850" height="1" fill="#d9d9d9"/><rect x="39" y="897" width="1850" height="1" fill="#d9d9d9"/><rect x="39" y="926" width="1850" height="1" fill="#d9d9d9"/><rect x="39" y="953" width="1850" height="1" fill="#d9d9d9"/><rect x="299" y="305" width="1" height="28" fill="#c6c6c6"/><rect x="485" y="305" width="1" height="28" fill="#c6c6c6"/><rect x="717" y="305" width="1" height="28" fill="#c6c6c6"/><rect x="1027" y="305" width="1" height="28" fill="#c6c6c6"/><rect x="1123" y="305" width="1" height="28" fill="#c6c6c6"/><rect x="1219" y="305" width="1" height="28" fill="#c6c6c6"/><rect x="1315" y="305" width="1" height="28" fill="#c6c6c6"/><rect x="1411" y="305" width="1" height="28" fill="#c6c6c6"/><rect x="1507" y="305" width="1" height="28" fill="#c6c6c6"/><rect x="1603" y="305" width="1" height="28" fill="#c6c6c6"/><rect x="1699" y="305" width="1" height="28" fill="#c6c6c6"/><rect x="1795" y="305" width="1" height="28" fill="#c6c6c6"/><rect x="0" y="360" width="39" height="1" fill="#c6c6c6"/><rect x="0" y="396" width="39" height="1" fill="#c6c6c6"/><rect x="0" y="407" width="39" height="1" fill="#c6c6c6"/><rect x="0" y="433" width="39" height="1" fill="#c6c6c6"/><rect x="0" y="462" width="39" height="1" fill="#c6c6c6"/><rect x="0" y="491" width="39" height="1" fill="#c6c6c6"/><rect x="0" y="520" width="39" height="1" fill="#c6c6c6"/><rect x="0" y="549" width="39" height="1" fill="#c6c6c6"/><rect x="0" y="578" width="39" height="1" fill="#c6c6c6"/><rect x="0" y="607" width="39" height="1" fill="#c6c6c6"/><rect x="0" y="636" width="39" height="1" fill="#c6c6c6"/><rect x="0" y="665" width="39" height="1" fill="#c6c6c6"/><rect x="0" y="694" width="39" height="1" fill="#c6c6c6"/><rect x="0" y="723" width="39" height="1" fill="#c6c6c6"/><rect x="0" y="752" width="39" height="1" fill="#c6c6c6"/><rect x="0" y="781" width="39" height="1" fill="#c6c6c6"/><rect x="0" y="810" width="39" height="1" fill="#c6c6c6"/><rect x="0" y="839" width="39" height="1" fill="#c6c6c6"/><rect x="0" y="868" width="39" height="1" fill="#c6c6c6"/><rect x="0" y="897" width="39" height="1" fill="#c6c6c6"/><rect x="0" y="926" width="39" height="1" fill="#c6c6c6"/><rect x="0" y="953" width="39" height="1" fill="#c6c6c6"/><rect x="0" y="333" width="1889" height="1" fill="#9b9b9b"/><rect x="39" y="305" width="1" height="648" fill="#9b9b9b"/><rect x="1889" y="333" width="1" height="620" fill="#9b9b9b"/><rect x="39" y="407" width="1030" height="1" fill="#ed7d31"/><rect x="39" y="433" width="1030" height="1" fill="#ed7d31"/><path d="M36 309 V330 H15 Z" fill="#b8b8b8"/><rect x="39" y="331" width="260" height="2" fill="#217346"/><rect x="37" y="433" width="2" height="29" fill="#217346"/><rect x="39" y="433" width="261" height="30" fill="none" stroke="#217346" stroke-width="2"/><rect x="295.5" y="459" width="6" height="6" fill="#217346" stroke="#ffffff" stroke-width="1"/></svg>
<div class="t" style="left:163.50px;top:310.00px;font-size:20.29px;line-height:normal;color:#217346;font-family:'Liberation Sans', sans-serif;transform:scaleX(0.9048);transform-origin:0 0;">A</div>
<div class="t" style="left:387.00px;top:310.00px;font-size:20.29px;line-height:normal;color:#222222;font-family:'Liberation Sans', sans-serif;transform:scaleX(0.7411);transform-origin:0 0;">B</div>
<div class="t" style="left:596.60px;top:310.00px;font-size:20.29px;line-height:normal;color:#222222;font-family:'Liberation Sans', sans-serif;transform:scaleX(0.7461);transform-origin:0 0;">C</div>
<div class="t" style="left:866.00px;top:310.00px;font-size:20.29px;line-height:normal;color:#222222;font-family:'Liberation Sans', sans-serif;transform:scaleX(0.8899);transform-origin:0 0;">D</div>
<div class="t" style="left:1744.00px;top:310.00px;font-size:20.29px;line-height:normal;color:#222222;font-family:'Liberation Sans', sans-serif;transform:scaleX(0.7104);transform-origin:0 0;">L</div>
<div class="t" style="left:1836.30px;top:310.00px;font-size:20.29px;line-height:normal;color:#222222;font-family:'Liberation Sans', sans-serif;transform:scaleX(0.9149);transform-origin:0 0;">M</div>
<div class="t" style="left:15.70px;top:340.00px;font-size:20.29px;line-height:normal;color:#222222;font-family:'Liberation Sans', sans-serif;transform:scaleX(0.6039);transform-origin:0 0;">1</div>
<div class="t" style="left:14.80px;top:371.00px;font-size:20.29px;line-height:normal;color:#222222;font-family:'Liberation Sans', sans-serif;transform:scaleX(0.8703);transform-origin:0 0;">2</div>
<div class="r" style="left:0;top:397px;width:39px;height:10px;overflow:hidden;"><div class="t" style="left:14.80px;top:-10.00px;font-size:20.29px;line-height:normal;color:#222222;font-family:'Liberation Sans', sans-serif;transform:scaleX(0.8703);transform-origin:0 0;">3</div></div>
<div class="t" style="left:14.80px;top:409.00px;font-size:20.29px;line-height:normal;color:#222222;font-family:'Liberation Sans', sans-serif;transform:scaleX(0.8703);transform-origin:0 0;">4</div>
<div class="t" style="left:14.80px;top:438.00px;font-size:20.29px;line-height:normal;color:#217346;font-family:'Liberation Sans', sans-serif;transform:scaleX(0.8703);transform-origin:0 0;">5</div>
<div class="t" style="left:14.80px;top:467.00px;font-size:20.29px;line-height:normal;color:#222222;font-family:'Liberation Sans', sans-serif;transform:scaleX(0.8703);transform-origin:0 0;">6</div>
<div class="t" style="left:14.80px;top:496.00px;font-size:20.29px;line-height:normal;color:#222222;font-family:'Liberation Sans', sans-serif;transform:scaleX(0.8703);transform-origin:0 0;">7</div>
<div class="t" style="left:14.80px;top:525.00px;font-size:20.29px;line-height:normal;color:#222222;font-family:'Liberation Sans', sans-serif;transform:scaleX(0.8703);transform-origin:0 0;">8</div>
<div class="t" style="left:14.80px;top:554.00px;font-size:20.29px;line-height:normal;color:#222222;font-family:'Liberation Sans', sans-serif;transform:scaleX(0.8703);transform-origin:0 0;">9</div>
<div class="t" style="left:11.00px;top:583.00px;font-size:20.29px;line-height:normal;color:#222222;font-family:'Liberation Sans', sans-serif;transform:scaleX(0.8347);transform-origin:0 0;">10</div>
<div class="t" style="left:11.00px;top:612.00px;font-size:20.29px;line-height:normal;color:#222222;font-family:'Liberation Sans', sans-serif;transform:scaleX(0.8909);transform-origin:0 0;">11</div>
<div class="t" style="left:11.00px;top:641.00px;font-size:20.29px;line-height:normal;color:#222222;font-family:'Liberation Sans', sans-serif;transform:scaleX(0.8347);transform-origin:0 0;">12</div>
<div class="t" style="left:11.00px;top:670.00px;font-size:20.29px;line-height:normal;color:#222222;font-family:'Liberation Sans', sans-serif;transform:scaleX(0.8347);transform-origin:0 0;">13</div>
<div class="t" style="left:11.00px;top:699.00px;font-size:20.29px;line-height:normal;color:#222222;font-family:'Liberation Sans', sans-serif;transform:scaleX(0.8347);transform-origin:0 0;">14</div>
<div class="t" style="left:11.00px;top:728.00px;font-size:20.29px;line-height:normal;color:#222222;font-family:'Liberation Sans', sans-serif;transform:scaleX(0.8347);transform-origin:0 0;">15</div>
<div class="t" style="left:11.00px;top:757.00px;font-size:20.29px;line-height:normal;color:#222222;font-family:'Liberation Sans', sans-serif;transform:scaleX(0.8347);transform-origin:0 0;">16</div>
<div class="t" style="left:11.00px;top:786.00px;font-size:20.29px;line-height:normal;color:#222222;font-family:'Liberation Sans', sans-serif;transform:scaleX(0.8347);transform-origin:0 0;">17</div>
<div class="t" style="left:11.00px;top:815.00px;font-size:20.29px;line-height:normal;color:#222222;font-family:'Liberation Sans', sans-serif;transform:scaleX(0.8347);transform-origin:0 0;">18</div>
<div class="t" style="left:11.00px;top:844.00px;font-size:20.29px;line-height:normal;color:#222222;font-family:'Liberation Sans', sans-serif;transform:scaleX(0.8347);transform-origin:0 0;">19</div>
<div class="t" style="left:10.70px;top:873.00px;font-size:20.29px;line-height:normal;color:#222222;font-family:'Liberation Sans', sans-serif;transform:scaleX(0.8703);transform-origin:0 0;">20</div>
<div class="t" style="left:10.70px;top:902.00px;font-size:20.29px;line-height:normal;color:#222222;font-family:'Liberation Sans', sans-serif;transform:scaleX(0.8703);transform-origin:0 0;">21</div>
<div class="t" style="left:10.70px;top:932.00px;font-size:20.29px;line-height:normal;color:#222222;font-family:'Liberation Sans', sans-serif;transform:scaleX(0.8703);transform-origin:0 0;">22</div>
<div class="t" style="left:44.80px;top:363.00px;font-size:28.41px;line-height:normal;color:#1f3864;font-family:'Liberation Sans', sans-serif;font-weight:bold;transform:scaleX(0.9720);transform-origin:0 0;">Sales</div>
<div class="t" style="left:44.00px;top:409.00px;font-size:21.16px;line-height:normal;color:#595959;font-family:'Liberation Sans', sans-serif;font-weight:bold;transform:scaleX(0.9349);transform-origin:0 0;">Order date</div>
<div class="t" style="left:303.75px;top:409.00px;font-size:21.16px;line-height:normal;color:#595959;font-family:'Liberation Sans', sans-serif;font-weight:bold;transform:scaleX(0.8957);transform-origin:0 0;">Region</div>
<div class="t" style="left:489.50px;top:409.00px;font-size:21.16px;line-height:normal;color:#595959;font-family:'Liberation Sans', sans-serif;font-weight:bold;transform:scaleX(0.9271);transform-origin:0 0;">Sales rep</div>
<div class="t" style="left:721.60px;top:409.00px;font-size:21.16px;line-height:normal;color:#595959;font-family:'Liberation Sans', sans-serif;font-weight:bold;transform:scaleX(0.8831);transform-origin:0 0;">Item</div>
<div class="t" style="left:1032.00px;top:409.00px;font-size:21.16px;line-height:normal;color:#595959;font-family:'Liberation Sans', sans-serif;font-weight:bold;transform:scaleX(0.8861);transform-origin:0 0;">U</div>
<div class="r" style="left:1890px;top:305px;width:30px;height:648px;background:#e6e6e6;"></div>
<div class="r" style="left:1892px;top:356px;width:25px;height:574px;background:#dadada;"></div>
<div class="r" style="left:1892px;top:306px;width:25px;height:25px;background:#ffffff;border:1px solid #c6c6c6;box-sizing:border-box;"></div>
<svg class="r" style="left:1898px;top:314px;" width="13" height="8" viewBox="0 0 13 8"><path d="M1 7 L6.5 1 L12 7Z" fill="#6b6b6b"/></svg>
<div class="r" style="left:1892px;top:331px;width:25px;height:26px;background:#ffffff;border:1px solid #c6c6c6;box-sizing:border-box;"></div>
<div class="r" style="left:1892px;top:930px;width:25px;height:24px;background:#ffffff;border:1px solid #c6c6c6;box-sizing:border-box;"></div>
<svg class="r" style="left:1898px;top:939px;" width="13" height="8" viewBox="0 0 13 8"><path d="M1 1 L6.5 7 L12 1Z" fill="#6b6b6b"/></svg>
<div class="r" style="left:0px;top:953px;width:1920px;height:35px;background:#e6e6e6;"></div>
<div class="r" style="left:0px;top:953px;width:1890px;height:1px;background:#9b9b9b;"></div>
<div class="r" style="left:0px;top:987px;width:1920px;height:1px;background:#c6c6c6;"></div>
<svg class="r" style="left:27px;top:962px;" width="10" height="15" viewBox="0 0 10 15"><path d="M8 1 L1.5 7.5 L8 14Z" fill="#c4c4c4"/></svg>
<svg class="r" style="left:62px;top:962px;" width="10" height="15" viewBox="0 0 10 15"><path d="M2 1 L8.5 7.5 L2 14Z" fill="#c4c4c4"/></svg>
<div class="r" style="left:118px;top:953px;width:73px;height:30px;background:#ffffff;border:1px solid #b0b0b0;box-sizing:border-box;border-top:none;"></div>
<div class="r" style="left:118px;top:981px;width:73px;height:2px;background:#217346;"></div>
<div class="t" style="left:130.50px;top:957.00px;font-size:19.57px;line-height:normal;color:#217346;font-family:'Liberation Sans', sans-serif;font-weight:bold;transform:scaleX(0.9284);transform-origin:0 0;">Sales</div>
<div class="t" style="left:204.80px;top:957.00px;font-size:20.29px;line-height:normal;color:#333333;font-family:'Liberation Sans', sans-serif;transform:scaleX(0.9252);transform-origin:0 0;">Items</div>
<div class="r" style="left:266px;top:957px;width:1px;height:26px;background:#b0b0b0;"></div>
<div class="t" style="left:281.00px;top:957.00px;font-size:20.29px;line-height:normal;color:#333333;font-family:'Liberation Sans', sans-serif;transform:scaleX(0.9253);transform-origin:0 0;">Regions</div>
<div class="r" style="left:364px;top:957px;width:1px;height:26px;background:#b0b0b0;"></div>
<svg class="r" style="left:403px;top:958px;" width="24" height="24" viewBox="0 0 24 24"><g fill="none" stroke="#666" stroke-width="1.3"><circle cx="12" cy="12" r="10.5"/><path d="M12 6.5 V17.5 M6.5 12 H17.5"/></g></svg>
<div class="r" style="left:1148px;top:963px;width:3px;height:3px;background:#a8a8a8;"></div>
<div class="r" style="left:1148px;top:969px;width:3px;height:3px;background:#a8a8a8;"></div>
<div class="r" style="left:1148px;top:975px;width:3px;height:3px;background:#a8a8a8;"></div>
<div class="r" style="left:1168px;top:957px;width:722px;height:25px;background:#dadada;"></div>
<div class="r" style="left:1168px;top:957px;width:25px;height:25px;background:#ffffff;border:1px solid #b5b5b5;box-sizing:border-box;"></div>
<svg class="r" style="left:1175px;top:963px;" width="8" height="13" viewBox="0 0 8 13"><path d="M7 1 L1 6.5 L7 12Z" fill="#6b6b6b"/></svg>
<div class="r" style="left:1192px;top:957px;width:80px;height:25px;background:#ffffff;border:1px solid #b5b5b5;box-sizing:border-box;"></div>
<div class="r" style="left:1866px;top:957px;width:25px;height:25px;background:#ffffff;border:1px solid #c6c6c6;box-sizing:border-box;"></div>
<svg class="r" style="left:1875px;top:963px;" width="8" height="13" viewBox="0 0 8 13"><path d="M1 1 L7 6.5 L1 12Z" fill="#6b6b6b"/></svg>
<div class="r" style="left:0px;top:988px;width:1920px;height:32px;background:#f3f2f1;"></div>
<div class="t" style="left:11.70px;top:996.00px;font-size:16.96px;line-height:normal;color:#444444;font-family:'Liberation Sans', sans-serif;transform:scaleX(0.8636);transform-origin:0 0;">Enter</div>
<svg class="r" style="left:78px;top:992px;" width="28" height="26" viewBox="0 0 28 26"><g fill="none" stroke="#424242" stroke-width="1.5"><path d="M4.5 21.5 V3.8 H24.8 V11"/><path d="M4.5 7.5 H24.8"/><path d="M7 11.5 H11 M7 15 H10 M7 18.5 H9.5 M4.5 21.5 H10"/><circle cx="17.8" cy="15.7" r="5.8"/></g><circle cx="17.8" cy="15.7" r="2.7" fill="#424242"/></svg>
<svg class="r" style="left:122px;top:990px;" width="32" height="28" viewBox="0 0 32 28"><g fill="none" stroke="#424242" stroke-width="1.5"><path d="M17 5 A9.5 9.5 0 1 0 16 23" stroke-dasharray="3.2 2.2"/><path d="M14.6 3 V14 M11.3 10.7 L14.6 14 L17.9 10.7"/><path d="M20 12 L24.5 9 M21.5 6.5 L24.5 9 L22 12" stroke-width="1.6"/><path d="M19.5 14.5 L29 24 M29 14.5 L19.5 24"/></g></svg>
<div class="t" style="left:155.70px;top:995.00px;font-size:16.96px;line-height:normal;color:#444444;font-family:'Liberation Sans', sans-serif;transform:scaleX(0.8966);transform-origin:0 0;">Accessibility: Investigate</div>
<svg class="r" style="left:1492px;top:992px;" width="24" height="22" viewBox="0 0 24 22"><g fill="none" stroke="#8a8a8a" stroke-width="1.3"><rect x="2.5" y="2.5" width="19" height="18"/><path d="M2.5 8.5 H21.5 M2.5 14.5 H21.5 M8.8 2.5 V20.5 M15.2 2.5 V20.5"/></g></svg>
<svg class="r" style="left:1553px;top:992px;" width="24" height="22" viewBox="0 0 24 22"><g fill="none" stroke="#8a8a8a" stroke-width="1.3"><rect x="2.5" y="2.5" width="19" height="18"/><rect x="5.5" y="5.5" width="13" height="12"/><path d="M8 9 H16 M8 12 H16 M8 15 H16"/></g></svg>
<svg class="r" style="left:1613px;top:992px;" width="24" height="22" viewBox="0 0 24 22"><g fill="none" stroke="#8a8a8a" stroke-width="1.3"><path d="M2.5 20.5 V2.5 H21.5 V20.5 M8 2.5 V10 H14 V2.5"/></g></svg>
<div class="r" style="left:1663px;top:1003px;width:12px;height:1.3px;background:#a0a0a0;"></div>
<div class="r" style="left:1683px;top:1003px;width:148px;height:2px;background:#b0b0b0;"></div>
<div class="r" style="left:1756px;top:1000px;width:2px;height:8px;background:#a0a0a0;"></div>
<svg class="r" style="left:1838px;top:997px;" width="14" height="14" viewBox="0 0 14 14"><path d="M7 1 V13 M1 7 H13" stroke="#a0a0a0" stroke-width="1.3"/></svg>
<div class="t" style="left:1870.60px;top:996.00px;font-size:15.07px;line-height:normal;color:#a0a0a0;font-family:'Liberation Sans', sans-serif;transform:scaleX(0.9887);transform-origin:0 0;">100%</div>
<div class="r" style="left:0px;top:1020px;width:1920px;height:4px;background:#2c2e26;"></div>
<div class="r" style="left:0px;top:1020px;width:72px;height:4px;background:#1c1a1c;"></div>
<div class="r" style="left:72px;top:1020px;width:516px;height:4px;background:#f0f0f0;"></div>
<div class="r" style="left:72px;top:1020px;width:516px;height:1px;background:#bdbdbd;"></div>
<div class="r" style="left:1044px;top:160px;width:653px;height:505px;background:#f0f0f0;border:1px solid #646464;box-sizing:border-box;box-shadow:0 0 18px 4px rgba(0,0,0,0.22);"></div>
<div class="r" style="left:1045px;top:161px;width:651px;height:44px;background:#ffffff;"></div>
<div class="t" style="left:1057.20px;top:174.00px;font-size:18.12px;line-height:normal;color:#000000;font-family:'Liberation Sans', sans-serif;transform:scaleX(0.9716);transform-origin:0 0;">Data Validation</div>
<div class="t" style="left:1587.50px;top:171.00px;font-size:21.14px;line-height:normal;color:#000000;font-family:'Liberation Sans', sans-serif;transform:scaleX(0.6818);transform-origin:0 0;">?</div>
<svg class="r" style="left:1652px;top:173px;" width="20" height="20" viewBox="0 0 20 20"><path d="M2.2 2.2 L17 17 M17 2.2 L2.2 17" stroke="#000" stroke-width="1.15"/></svg>
<div class="r" style="left:1146px;top:218px;width:130px;height:32px;background:#f0f0f0;border:1px solid #d9d9d9;box-sizing:border-box;"></div>
<div class="r" style="left:1275px;top:218px;width:101px;height:32px;background:#f0f0f0;border:1px solid #d9d9d9;box-sizing:border-box;"></div>
<div class="r" style="left:1055px;top:249px;width:629px;height:353px;background:#ffffff;border:1px solid #d9d9d9;box-sizing:border-box;"></div>
<div class="r" style="left:1055px;top:216px;width:92px;height:34px;background:#ffffff;border:1px solid #d9d9d9;box-sizing:border-box;border-bottom:none;"></div>
<div class="r" style="left:1056px;top:249px;width:90px;height:2px;background:#ffffff;"></div>
<div class="t" style="left:1072.50px;top:225.00px;font-size:16.67px;line-height:normal;color:#000000;font-family:'Liberation Sans', sans-serif;transform:scaleX(0.9129);transform-origin:0 0;">Settings</div>
<div class="t" style="left:1160.30px;top:226.00px;font-size:16.67px;line-height:normal;color:#000000;font-family:'Liberation Sans', sans-serif;transform:scaleX(0.9192);transform-origin:0 0;">Input Message</div>
<div class="t" style="left:1290.60px;top:226.00px;font-size:16.67px;line-height:normal;color:#000000;font-family:'Liberation Sans', sans-serif;transform:scaleX(0.9480);transform-origin:0 0;">Error Alert</div>
<div class="t" style="left:1070.50px;top:267.00px;font-size:16.67px;line-height:normal;color:#000000;font-family:'Liberation Sans', sans-serif;transform:scaleX(0.9568);transform-origin:0 0;">Validation criteria</div>
<div class="r" style="left:1198px;top:275px;width:473px;height:1px;background:#dcdcdc;"></div>
<div class="t" style="left:1085.20px;top:299.00px;font-size:16.67px;line-height:normal;color:#000000;font-family:'Liberation Sans', sans-serif;transform:scaleX(0.9393);transform-origin:0 0;"><u>A</u>llow:</div>
<div class="r" style="left:1085px;top:323px;width:215px;height:34px;background:#ffffff;border:1px solid #adadad;box-sizing:border-box;"></div>
<div class="r" style="left:1272px;top:325px;width:26px;height:30px;background:#e1e1e1;border:1px solid #adadad;box-sizing:border-box;"></div>
<svg class="r" style="left:1278px;top:335px;" width="14" height="9" viewBox="0 0 14 9"><path d="M1.5 1.5 L7 7 L12.5 1.5" fill="none" stroke="#606060" stroke-width="1"/></svg>
<div class="t" style="left:1090.50px;top:331.00px;font-size:16.67px;line-height:normal;color:#000000;font-family:'Liberation Sans', sans-serif;transform:scaleX(0.8900);transform-origin:0 0;">Date</div>
<div class="r" style="left:1315px;top:325px;width:20px;height:20px;background:#ffffff;border:1px solid #333333;box-sizing:border-box;"></div>
<svg class="r" style="left:1315px;top:325px;" width="20" height="20" viewBox="0 0 20 20"><path d="M4 10 L8 14.5 L16.5 5" fill="none" stroke="#333" stroke-width="1.5"/></svg>
<div class="t" style="left:1341.60px;top:327.00px;font-size:16.67px;line-height:normal;color:#000000;font-family:'Liberation Sans', sans-serif;transform:scaleX(0.9376);transform-origin:0 0;">Ignore <u>b</u>lank</div>
<div class="t" style="left:1085.20px;top:364.00px;font-size:16.67px;line-height:normal;color:#000000;font-family:'Liberation Sans', sans-serif;transform:scaleX(0.8686);transform-origin:0 0;"><u>D</u>ata:</div>
<div class="r" style="left:1085px;top:388px;width:215px;height:34px;background:#ffffff;border:1px solid #adadad;box-sizing:border-box;"></div>
<div class="r" style="left:1272px;top:390px;width:26px;height:30px;background:#e1e1e1;border:1px solid #adadad;box-sizing:border-box;"></div>
<svg class="r" style="left:1278px;top:400px;" width="14" height="9" viewBox="0 0 14 9"><path d="M1.5 1.5 L7 7 L12.5 1.5" fill="none" stroke="#606060" stroke-width="1"/></svg>
<div class="t" style="left:1090.50px;top:396.00px;font-size:16.41px;line-height:normal;color:#000000;font-family:'Liberation Sans', sans-serif;transform:scaleX(0.9425);transform-origin:0 0;">less than or equal to</div>
<div class="t" style="left:1085.20px;top:429.00px;font-size:16.67px;line-height:normal;color:#000000;font-family:'Liberation Sans', sans-serif;transform:scaleX(0.8762);transform-origin:0 0;">E<u>n</u>d date:</div>
<div class="r" style="left:1085px;top:453px;width:420px;height:32px;background:#ffffff;border:1px solid #adadad;box-sizing:border-box;"></div>
<div class="t" style="left:1091.00px;top:460.00px;font-size:15.94px;line-height:normal;color:#000000;font-family:'Liberation Sans', sans-serif;transform:scaleX(0.9426);transform-origin:0 0;">=TODAY()</div>
<div class="r" style="left:1161px;top:457px;width:1px;height:21px;background:#000000;"></div>
<div class="r" style="left:1472px;top:453px;width:33px;height:32px;background:#e1e1e1;border:2px solid #b9b9b9;box-sizing:border-box;"></div>
<div class="r" style="left:1476px;top:458px;width:23px;height:21px;background:#ffffff;"></div>
<svg class="r" style="left:1479px;top:458px;" width="16" height="19" viewBox="0 0 16 19"><path d="M8 2 L2.5 8 H6 V13 H10 V8 H13.5 Z" fill="#000"/><rect x="2.5" y="15.5" width="11" height="1.3" fill="#000"/></svg>
<div class="r" style="left:1070px;top:563px;width:20px;height:20px;background:#ffffff;border:1px solid #cccccc;box-sizing:border-box;"></div>
<div class="t" style="left:1096.70px;top:565.00px;font-size:16.67px;line-height:normal;color:#6d6d6d;font-family:'Liberation Sans', sans-serif;transform:scaleX(0.9272);transform-origin:0 0;">Apply these changes to all other cells with the same settings</div>
<div class="r" style="left:1055px;top:616px;width:124px;height:36px;background:#e1e1e1;border:1px solid #adadad;box-sizing:border-box;"></div>
<div class="t" style="left:1088.30px;top:625.00px;font-size:16.67px;line-height:normal;color:#000000;font-family:'Liberation Sans', sans-serif;transform:scaleX(0.9181);transform-origin:0 0;"><u>C</u>lear All</div>
<div class="r" style="left:1421px;top:616px;width:124px;height:36px;background:#e1e1e1;border:2px solid #0078d7;box-sizing:border-box;"></div>
<div class="t" style="left:1472.50px;top:625.00px;font-size:16.67px;line-height:normal;color:#000000;font-family:'Liberation Sans', sans-serif;transform:scaleX(0.8429);transform-origin:0 0;">OK</div>
<div class="r" style="left:1561px;top:616px;width:124px;height:36px;background:#e1e1e1;border:1px solid #adadad;box-sizing:border-box;"></div>
<div class="t" style="left:1600.50px;top:625.00px;font-size:16.67px;line-height:normal;color:#000000;font-family:'Liberation Sans', sans-serif;transform:scaleX(0.8629);transform-origin:0 0;">Cancel</div>
</body></html>
